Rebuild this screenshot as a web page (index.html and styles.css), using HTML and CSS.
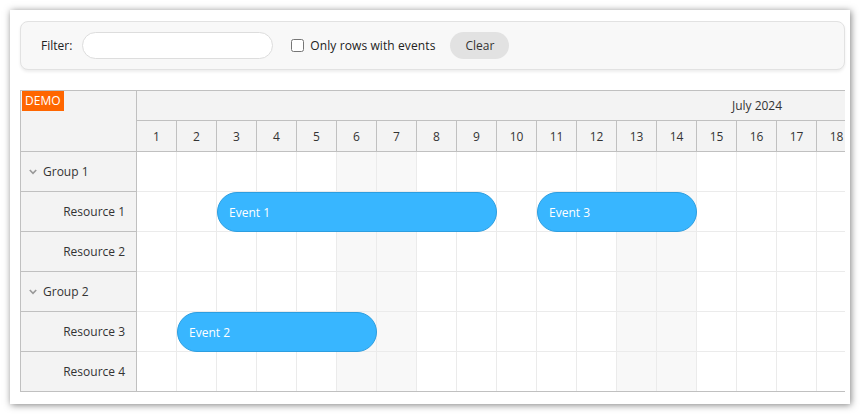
FILE: index.html
```html
<!DOCTYPE html>
<html>
<head>
<meta charset="utf-8">
<link rel="stylesheet" href="styles.css">
</head>
<body>
<div class="window">
  <div class="toolbar">
    <span class="lbl">Filter:</span>
    <input class="filter" type="text">
    <label class="chk"><input type="checkbox"> Only rows with events</label>
    <button class="clear">Clear</button>
  </div>
  <div class="scheduler">
    <div class="rowheaders">
      <div class="corner"><span class="demo">DEMO</span></div>
      <div class="rh group"><svg class="chev" width="8" height="6" viewBox="0 0 8 6"><polyline points="0.8,1 4,4.4 7.2,1" fill="none" stroke="#999" stroke-width="1.6"/></svg>Group 1</div>
      <div class="rh res">Resource 1</div>
      <div class="rh res">Resource 2</div>
      <div class="rh group"><svg class="chev" width="8" height="6" viewBox="0 0 8 6"><polyline points="0.8,1 4,4.4 7.2,1" fill="none" stroke="#999" stroke-width="1.6"/></svg>Group 2</div>
      <div class="rh res">Resource 3</div>
      <div class="rh res last">Resource 4</div>
    </div>
    <div class="main">
      <div class="hrow month"><div class="monthcell">July 2024</div></div>
      <div class="hrow days">
        <div class="day">1</div><div class="day">2</div><div class="day">3</div><div class="day">4</div><div class="day">5</div><div class="day">6</div><div class="day">7</div><div class="day">8</div><div class="day">9</div><div class="day">10</div><div class="day">11</div><div class="day">12</div><div class="day">13</div><div class="day">14</div><div class="day">15</div><div class="day">16</div><div class="day">17</div><div class="day">18</div>
      </div>
      <div class="row">
        <div class="c"></div><div class="c"></div><div class="c"></div><div class="c"></div><div class="c"></div><div class="c we"></div><div class="c we"></div><div class="c"></div><div class="c"></div><div class="c"></div><div class="c"></div><div class="c"></div><div class="c we"></div><div class="c we"></div><div class="c"></div><div class="c"></div><div class="c"></div><div class="c"></div>
      </div>
      <div class="row">
        <div class="c"></div><div class="c"></div><div class="c"></div><div class="c"></div><div class="c"></div><div class="c we"></div><div class="c we"></div><div class="c"></div><div class="c"></div><div class="c"></div><div class="c"></div><div class="c"></div><div class="c we"></div><div class="c we"></div><div class="c"></div><div class="c"></div><div class="c"></div><div class="c"></div>
        <div class="event" style="left:80px;width:280px">Event 1</div>
        <div class="event" style="left:400px;width:160px">Event 3</div>
      </div>
      <div class="row">
        <div class="c"></div><div class="c"></div><div class="c"></div><div class="c"></div><div class="c"></div><div class="c we"></div><div class="c we"></div><div class="c"></div><div class="c"></div><div class="c"></div><div class="c"></div><div class="c"></div><div class="c we"></div><div class="c we"></div><div class="c"></div><div class="c"></div><div class="c"></div><div class="c"></div>
      </div>
      <div class="row">
        <div class="c"></div><div class="c"></div><div class="c"></div><div class="c"></div><div class="c"></div><div class="c we"></div><div class="c we"></div><div class="c"></div><div class="c"></div><div class="c"></div><div class="c"></div><div class="c"></div><div class="c we"></div><div class="c we"></div><div class="c"></div><div class="c"></div><div class="c"></div><div class="c"></div>
      </div>
      <div class="row">
        <div class="c"></div><div class="c"></div><div class="c"></div><div class="c"></div><div class="c"></div><div class="c we"></div><div class="c we"></div><div class="c"></div><div class="c"></div><div class="c"></div><div class="c"></div><div class="c"></div><div class="c we"></div><div class="c we"></div><div class="c"></div><div class="c"></div><div class="c"></div><div class="c"></div>
        <div class="event" style="left:40px;width:200px">Event 2</div>
      </div>
      <div class="row last">
        <div class="c"></div><div class="c"></div><div class="c"></div><div class="c"></div><div class="c"></div><div class="c we"></div><div class="c we"></div><div class="c"></div><div class="c"></div><div class="c"></div><div class="c"></div><div class="c"></div><div class="c we"></div><div class="c we"></div><div class="c"></div><div class="c"></div><div class="c"></div><div class="c"></div>
      </div>
    </div>
  </div>
</div>
</body>
</html>
```
FILE: styles.css
```css
html, body {
  margin: 0;
  padding: 0;
  background: #fff;
}
body {
  font-family: "Open Sans", "Noto Sans", sans-serif;
  font-size: 12px;
  color: #333;
}
.window {
  box-sizing: border-box;
  margin: 10px;
  width: 840px;
  height: 394px;
  padding: 11px 5px 0 10px;
  background: #fff;
  box-shadow: 1px 1px 7px rgba(0, 0, 0, 0.5);
}
.toolbar {
  box-sizing: border-box;
  height: 49px;
  border: 1px solid #e2e2e2;
  border-radius: 8px;
  background: #f8f8f8;
  box-shadow: 0 2px 3px rgba(0, 0, 0, 0.07);
  display: flex;
  align-items: center;
  padding-left: 20px;
}
.lbl {
  color: #222;
}
.filter {
  box-sizing: border-box;
  margin-left: 10px;
  width: 191px;
  height: 27px;
  border: 1px solid #ddd;
  border-radius: 14px;
  background: #fff;
  outline: none;
  padding: 0 10px;
}
.chk {
  margin-left: 14px;
  display: flex;
  align-items: center;
  font-size: 12px;
  letter-spacing: 0.1px;
  color: #222;
}
.chk input {
  margin: 0 6px 0 4px;
  width: 13px;
  height: 13px;
}
.clear {
  margin-left: 15px;
  box-sizing: border-box;
  width: 59px;
  height: 27px;
  border: none;
  border-radius: 14px;
  background: #e2e2e2;
  font-family: "Open Sans", "Noto Sans", sans-serif;
  font-size: 12px;
  color: #333;
  padding: 0;
}
.scheduler {
  box-sizing: border-box;
  margin-top: 20px;
  height: 302px;
  border: 1px solid #c0c0c0;
  border-right: none;
  display: flex;
  overflow: hidden;
}
.rowheaders {
  box-sizing: border-box;
  width: 116px;
  flex: none;
  border-right: 1px solid #c0c0c0;
  background: #f3f3f3;
}
.corner {
  box-sizing: border-box;
  height: 61px;
  border-bottom: 1px solid #c0c0c0;
  position: relative;
}
.demo {
  position: absolute;
  left: 1px;
  top: 0;
  background: #ff6600;
  color: #fff;
  height: 20px;
  line-height: 20px;
  padding: 0 3px;
}
.rh {
  box-sizing: border-box;
  height: 40px;
  border-bottom: 1px solid #c0c0c0;
  display: flex;
  align-items: center;
  color: #333;
}
.rh.last {
  border-bottom: none;
  height: 39px;
}
.group {
  padding-left: 8px;
}
.chev {
  margin-right: 6px;
}
.res {
  justify-content: flex-end;
  padding-right: 11px;
}
.main {
  flex: 1;
  overflow: hidden;
  min-width: 0;
}
.hrow {
  box-sizing: border-box;
  border-bottom: 1px solid #c0c0c0;
  background: #f3f3f3;
  display: flex;
}
.month {
  height: 30px;
}
.monthcell {
  flex: none;
  width: 1240px;
  display: flex;
  align-items: center;
  justify-content: center;
  color: #333;
}
.days {
  height: 31px;
}
.day {
  box-sizing: border-box;
  flex: none;
  width: 40px;
  border-right: 1px solid #c0c0c0;
  display: flex;
  align-items: center;
  justify-content: center;
}
.row {
  box-sizing: border-box;
  height: 40px;
  border-bottom: 1px solid #ebebeb;
  display: flex;
  position: relative;
}
.row.last {
  border-bottom: none;
  height: 39px;
}
.c {
  box-sizing: border-box;
  flex: none;
  width: 40px;
  border-right: 1px solid #ebebeb;
}
.c.we {
  background: #f8f8f8;
}
.event {
  position: absolute;
  top: 0;
  height: 40px;
  box-sizing: border-box;
  border: 1px solid #2d9ee0;
  border-radius: 20px;
  background: #38b6ff;
  color: #fff;
  display: flex;
  align-items: center;
  padding-left: 11px;
  font-size: 12px;
}
```
